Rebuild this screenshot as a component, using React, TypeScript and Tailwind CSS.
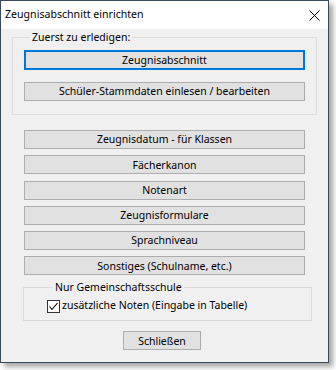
import React from "react";

const font = { fontFamily: '"Noto Sans", "Liberation Sans", sans-serif' };

function Btn({ label, def = false, className = "" }: { label: string; def?: boolean; className?: string }) {
  return (
    <div
      className={
        "flex items-center justify-center h-[19px] bg-[#e1e1e1] text-[10.5px] text-black leading-none " +
        (def ? "border-2 border-[#0078d7] " : "border border-[#adadad] ") +
        className
      }
    >
      {label}
    </div>
  );
}

export default function App() {
  return (
    <div className="w-[336px] h-[370px] bg-white relative" style={font}>
      <div className="w-[329px] h-[363px] border border-[#3b4a58] bg-[#f0f0f0] flex flex-col shadow-[4px_4px_5px_rgba(0,0,0,0.35)]">
        <div className="h-[28px] bg-white flex items-center justify-between pl-[4px] pr-[7px] shrink-0">
          <span className="text-[10.6px] text-black">Zeugnisabschnitt einrichten</span>
          <svg width="11" height="11" viewBox="0 0 11 11" className="mr-[1px]">
            <path d="M0.5 0.5 L10.5 10.5 M10.5 0.5 L0.5 10.5" stroke="#000" strokeWidth="1" />
          </svg>
        </div>
        <div className="flex flex-col px-[11px] pt-[0px]">
          <fieldset className="border border-[#dcdcdc] w-[305px] h-[85px] mt-[1px] px-[11px]">
            <legend className="ml-[6px] px-[2px] text-[10.5px] leading-[14px] text-black">Zuerst zu erledigen:</legend>
            <Btn label="Zeugnisabschnitt" def className="mt-[6px] h-[20px]" />
            <Btn label="Schüler-Stammdaten einlesen / bearbeiten" className="mt-[12px]" />
          </fieldset>
          <div className="flex flex-col gap-[6.3px] px-[12px] mt-[15px]">
            <Btn label="Zeugnisdatum - für Klassen" />
            <Btn label="Fächerkanon" />
            <Btn label="Notenart" />
            <Btn label="Zeugnisformulare" />
            <Btn label="Sprachniveau" />
            <Btn label="Sonstiges (Schulname, etc.)" />
          </div>
          <fieldset className="border border-[#dcdcdc] w-[289px] h-[41px] ml-[11px] mt-[5px] pl-[23px]">
            <legend className="ml-[6px] px-[2px] text-[10.5px] leading-[14px] text-black">Nur Gemeinschaftsschule</legend>
            <label className="flex items-center gap-[2px] mt-[4px] text-[10.5px] text-black">
              <span className="w-[13px] h-[13px] border border-[#333] bg-white flex items-center justify-center">
                <svg width="11" height="11" viewBox="0 0 11 11">
                  <path d="M1.5 5.5 L4 8.5 L9.5 2" stroke="#000" strokeWidth="1.1" fill="none" />
                </svg>
              </span>
              zusätzliche Noten (Eingabe in Tabelle)
            </label>
          </fieldset>
          <div className="flex justify-center mt-[10px] pr-[5px]">
            <Btn label="Schließen" className="w-[78px] h-[18px]" />
          </div>
        </div>
      </div>
    </div>
  );
}
